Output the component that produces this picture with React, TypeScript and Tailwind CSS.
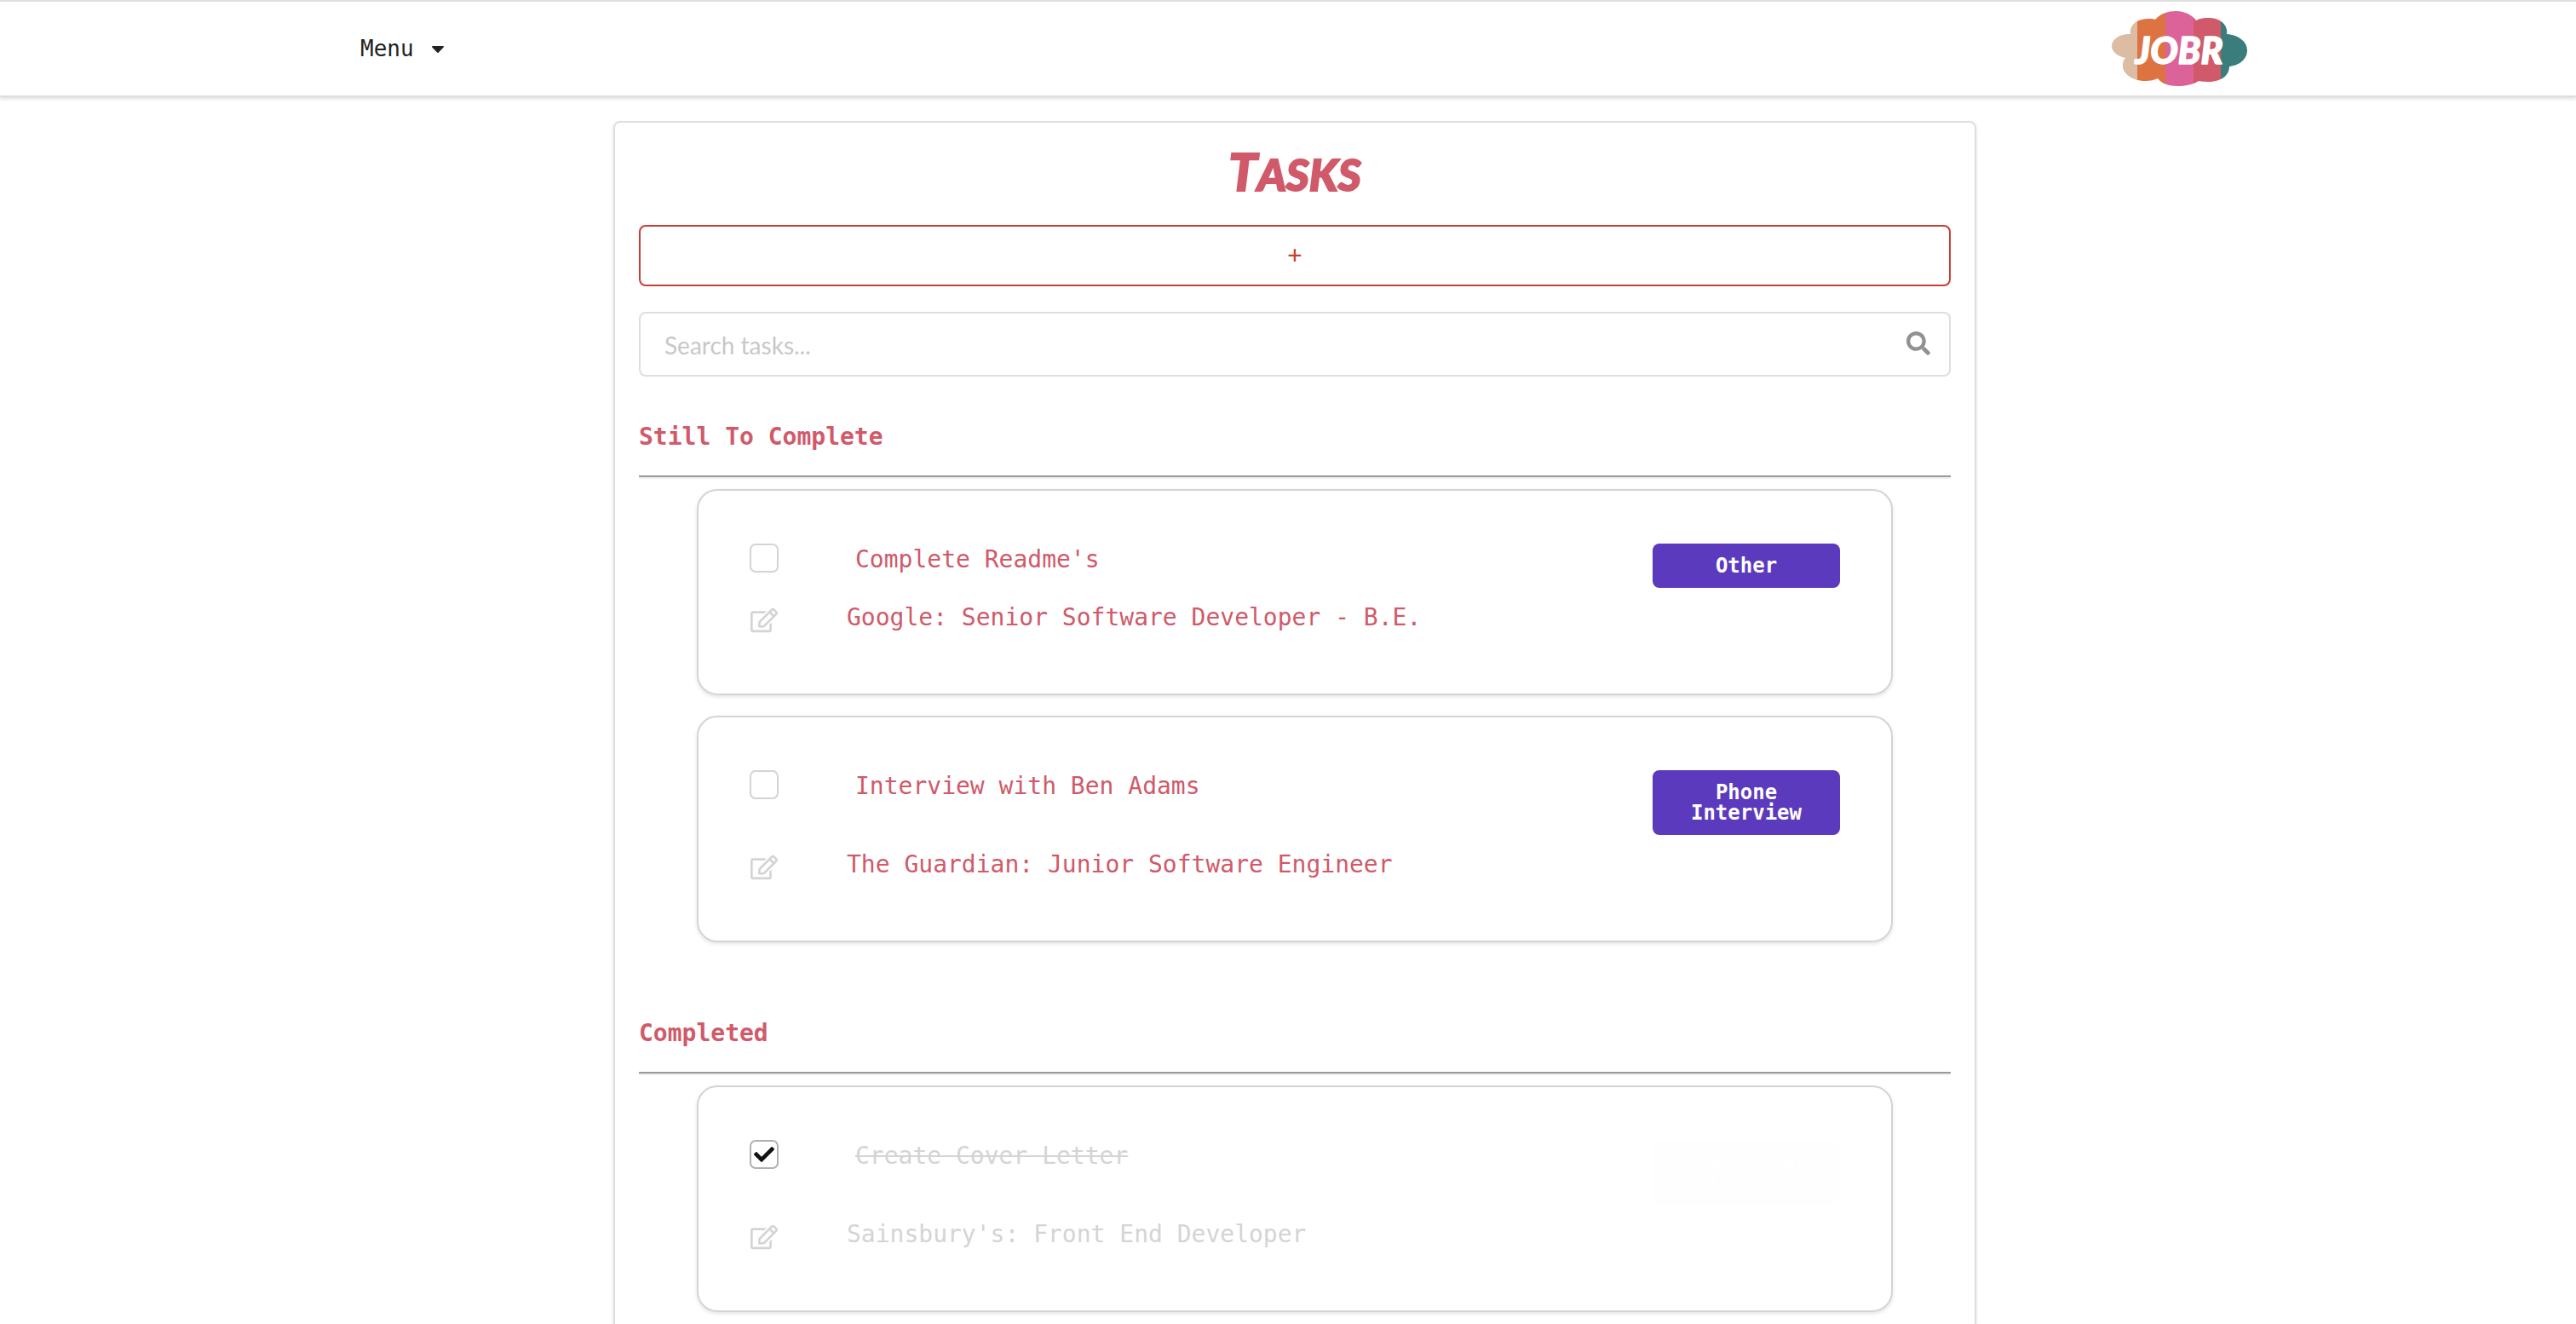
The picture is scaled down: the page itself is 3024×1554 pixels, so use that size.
import { FaSearch, FaRegEdit, FaCaretDown, FaCheck } from 'react-icons/fa';

type Task = {
  id: string;
  title: string;
  job: string;
  category: string;
  done?: boolean;
};

const pending: Task[] = [
  { id: 'readme', title: "Complete Readme's", job: 'Google: Senior Software Developer - B.E.', category: 'Other' },
  { id: 'interview', title: 'Interview with Ben Adams', job: 'The Guardian: Junior Software Engineer', category: 'Phone Interview' },
];

const completed: Task[] = [
  { id: 'cover', title: 'Create Cover Letter', job: "Sainsbury's: Front End Developer", category: 'Prep Cover Letter', done: true },
];

function Logo() {
  return (
    <svg viewBox="0 -1 160 90" className="h-[90px] w-[160px]" role="img" aria-label="JOBR">
      <defs>
        <clipPath id="cloud">
          <path d="M22 27 C20 15 32 8 46 9 Q49 9 51 10 C58 2 67 0 76 0 C86 0 95 5 99 11 C104 8 109 8 114 8 C128 8 137 17 135 27 C149 28 159 36 159 46 C159 57 149 64 138 65 C138 76 128 83 113 83 Q107 83 102 82 C96 86 87 88 77 88 C67 88 58 85 54 79 C50 81 45 82 40 82 C24 82 12 73 13 63 Q13 58 16 55 C6 53 0 47 0 41 C0 33 10 26 22 27 Z" />
        </clipPath>
      </defs>
      <g clipPath="url(#cloud)">
        <rect width="30" height="90" fill="#dcbca3" />
        <rect x="30" width="33" height="90" fill="#dc7341" />
        <rect x="63" width="33" height="90" fill="#dc6399" />
        <rect x="96" width="32" height="90" fill="#d05a6a" />
        <rect x="128" width="32" height="90" fill="#3a7d7c" />
      </g>
      <text
        x="79"
        y="62"
        textAnchor="middle"
        fill="#fff"
        stroke="#fff"
        strokeWidth="1.5"
        strokeLinejoin="round"
        className="font-['Lato'] text-[43px] font-black italic"
      >
        JOBR
      </text>
    </svg>
  );
}

function TaskCard({ task }: { task: Task }) {
  const tone = task.done ? 'text-[#d4d4d5]' : 'text-[#d05a6a]';
  return (
    <li className="rounded-3xl border-2 border-[#d4d4d5] px-[60px] pt-[62px] pb-[70px] shadow-[0_2px_4px_rgba(34,36,38,0.12)]">
      <div className="flex items-start">
        <span className="relative h-[34px] w-[34px]">
          <input
            id={task.id}
            type="checkbox"
            defaultChecked={task.done}
            className="peer block h-full w-full appearance-none rounded-[7px] border-2 border-[#d4d4d5] bg-white checked:border-[#b0b1b1]"
          />
          <FaCheck className="pointer-events-none absolute inset-0 m-auto hidden h-6 w-6 text-[#111] peer-checked:block" />
        </span>
        <label htmlFor={task.id} className={'ml-[90px] flex-1 text-[28px] leading-[38px] ' + tone + (task.done ? ' line-through' : '')}>
          {task.title}
        </label>
        <span
          className={
            'w-[220px] rounded-lg px-6 py-[14px] text-center text-2xl leading-6 font-bold text-white ' +
            (task.done ? 'bg-[#fefefe]' : 'bg-[#5c3abe]')
          }
        >
          {task.category}
        </span>
      </div>
      <div className="mt-4 flex items-start">
        <button type="button" aria-label={'Edit ' + task.title} className="mt-[6px] flex w-[34px] justify-center text-[#d4d4d5]">
          <FaRegEdit className="h-8 w-8" />
        </button>
        <p className={'ml-20 text-[28px] leading-[38px] ' + tone}>{task.job}</p>
      </div>
    </li>
  );
}

function TaskSection({ title, tasks }: { title: string; tasks: Task[] }) {
  return (
    <section>
      <h2 className="text-[28px] leading-[38px] font-bold text-[#d05a6a]">{title}</h2>
      <hr className="mt-[26px] border-t-2 border-b-2 border-t-[#999] border-b-[#eee]" />
      <ul className="mx-[68px] mt-3 flex flex-col gap-6">
        {tasks.map((task) => (
          <TaskCard key={task.id} task={task} />
        ))}
      </ul>
    </section>
  );
}

export default function App() {
  return (
    <div className="flex min-h-screen flex-col bg-white font-['DejaVu_Sans_Mono',monospace]">
      <header className="border-y-2 border-[#dededf] pl-4 shadow-[0_2px_4px_rgba(34,36,38,0.15)]">
        <nav className="mx-auto flex h-[110px] w-full max-w-[2254px] items-center justify-between pr-2 pl-[30px]">
          <button type="button" className="flex items-center gap-4 text-[26px] text-[#222]">
            Menu
            <FaCaretDown className="h-6 w-6" />
          </button>
          <a href="#home">
            <Logo />
          </a>
        </nav>
      </header>
      <div className="flex flex-1 flex-col pt-7 pl-4">
        <main className="mx-auto w-full max-w-[1600px] flex-1 rounded-t-lg border-2 border-b-0 border-[#dededf] px-7 shadow-[0_2px_4px_rgba(34,36,38,0.12)]">
          <h1 className="mt-6 h-[72px] text-center font-['Lato'] text-[52px] leading-[72px] font-black text-[#d05a6a] italic [-webkit-text-stroke:2px_#d05a6a]">
            <span className="text-[60px] leading-none">T</span>ASKS
          </h1>
          <button type="button" aria-label="Add task" className="mt-6 block h-[72px] w-full rounded-lg border-2 border-[#c73e36] text-[28px] text-[#c73e36]">
            +
          </button>
          <div className="relative mt-[30px]">
            <input
              type="search"
              aria-label="Search tasks"
              placeholder="Search tasks..."
              className="block h-[76px] w-full rounded-lg border-2 border-[#dededf] px-7 pt-0.5 font-['Lato'] text-[28px] placeholder:text-[#c8c8c8]"
            />
            <FaSearch className="absolute top-[23px] right-6 h-7 w-7 text-[#919191]" />
          </div>
          <div className="mt-[52px] flex flex-col gap-[88px]">
            <TaskSection title="Still To Complete" tasks={pending} />
            <TaskSection title="Completed" tasks={completed} />
          </div>
        </main>
      </div>
    </div>
  );
}
